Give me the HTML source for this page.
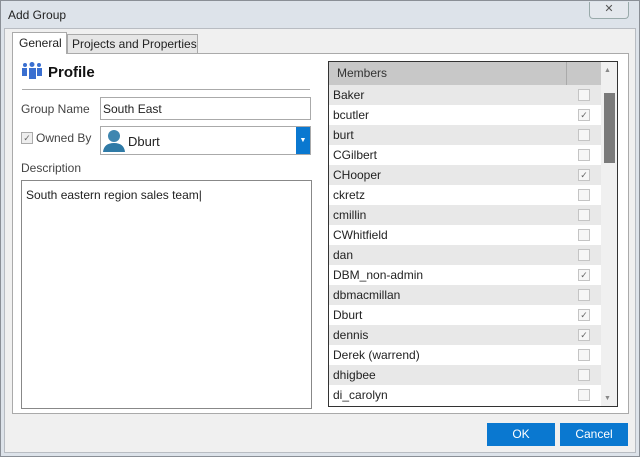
<!DOCTYPE html><html><head><style>
*{box-sizing:border-box;margin:0;padding:0}
body{width:640px;height:457px;overflow:hidden;font-family:"Liberation Sans",sans-serif;font-size:12px;color:#222;background:#fff;position:relative}
.a{position:absolute}
.frame{left:0;top:0;width:640px;height:457px;background:#dde3ea;border:1px solid #8a8f96}
.row{position:absolute;left:0;width:272px;height:20px;line-height:20px;padding-left:4px}
.cb{position:absolute;left:249px;top:4px;width:12px;height:12px;border:1px solid #c4c4c4;background:#f6f6f6;font-size:9px;line-height:10px;text-align:center;color:#666}
.btn{background:#0a78d0;color:#fff;text-align:center;line-height:23px;height:23px;font-size:12px}
</style></head><body>
<div class="a frame"></div>
<div class="a" style="left:8px;top:8px;font-size:12px">Add Group</div>
<div class="a" style="left:589px;top:2px;width:40px;height:17px;border:1px solid #9aa;border-top:none;border-radius:0 0 4px 4px;background:#e4e8ed;text-align:center;font-size:11px;line-height:15px;color:#555">✕</div>
<div class="a" style="left:4px;top:28px;width:632px;height:425px;background:#f0f0f0;border:1px solid #b8bcc2"></div>
<div class="a" style="left:12px;top:53px;width:617px;height:361px;background:#fff;border:1px solid #aaa"></div>
<div class="a" style="left:67px;top:34px;width:131px;height:20px;background:#e6e6e6;border:1px solid #aaa;line-height:18px;padding-left:4px">Projects and Properties</div>
<div class="a" style="left:12px;top:32px;width:55px;height:22px;background:#fff;border:1px solid #aaa;border-bottom:none;line-height:20px;padding-left:6px">General</div>
<svg class="a" style="left:22px;top:62px" width="20" height="18"><circle cx="3" cy="3" r="2" fill="#3a6fd0"/><circle cx="10" cy="2.5" r="2.5" fill="#3a6fd0"/><circle cx="17" cy="3" r="2" fill="#3a6fd0"/><rect x="0" y="6" width="5" height="8" fill="#3a6fd0"/><rect x="7" y="6" width="7" height="11" fill="#3a6fd0"/><rect x="15" y="6" width="5" height="8" fill="#3a6fd0"/></svg>
<div class="a" style="left:48px;top:64px;font-size:15px;font-weight:bold;color:#111">Profile</div>
<div class="a" style="left:22px;top:89px;width:288px;height:1px;background:#aaa"></div>
<div class="a" style="left:21px;top:102px;color:#444">Group Name</div>
<div class="a" style="left:100px;top:97px;width:211px;height:23px;border:1px solid #aaa;padding:4px 2px">South East</div>
<div class="a" style="left:21px;top:132px;width:12px;height:12px;border:1px solid #aaa;background:#eee;font-size:9px;line-height:10px;text-align:center;color:#666">✓</div>
<div class="a" style="left:36px;top:131px;color:#444">Owned By</div>
<div class="a" style="left:100px;top:126px;width:211px;height:29px;border:1px solid #aaa"></div>
<svg class="a" style="left:102px;top:128px" width="24" height="24"><circle cx="12" cy="8" r="6" fill="#3f86b0"/><path d="M1 24 Q2 15 12 15 Q22 15 23 24Z" fill="#2f7aa6"/></svg>
<div class="a" style="left:128px;top:134px;font-size:13px">Dburt</div>
<div class="a" style="left:296px;top:127px;width:14px;height:27px;background:#0a78d0;color:#fff;font-size:7px;text-align:center;line-height:27px">▼</div>
<div class="a" style="left:21px;top:161px;color:#444">Description</div>
<div class="a" style="left:21px;top:180px;width:291px;height:229px;border:1px solid #888;padding:7px 4px">South eastern region sales team|</div>
<div class="a" style="left:328px;top:61px;width:290px;height:346px;border:1px solid #333;overflow:hidden">
<div class="a" style="left:0;top:0;width:272px;height:23px;background:#c8c8c8;line-height:23px;padding-left:8px;color:#333">Members</div>
<div class="a" style="left:237px;top:0;width:1px;height:23px;background:#aaa"></div>
<div class="a" style="left:272px;top:0;width:16px;height:346px;background:#f0f0f0"></div>
<div class="a" style="left:275px;top:5px;font-size:7px;color:#888">▲</div>
<div class="a" style="left:275px;top:333px;font-size:7px;color:#888">▼</div>
<div class="a" style="left:275px;top:31px;width:11px;height:70px;background:#7a7a7a"></div>
<div class="a" style="left:0;top:23px;width:272px;height:330px">
<div class="row" style="top:0;background:#e8e8e8">Baker<span class="cb"></span></div>
<div class="row" style="top:20px">bcutler<span class="cb">✓</span></div>
<div class="row" style="top:40px;background:#e8e8e8">burt<span class="cb"></span></div>
<div class="row" style="top:60px">CGilbert<span class="cb"></span></div>
<div class="row" style="top:80px;background:#e8e8e8">CHooper<span class="cb">✓</span></div>
<div class="row" style="top:100px">ckretz<span class="cb"></span></div>
<div class="row" style="top:120px;background:#e8e8e8">cmillin<span class="cb"></span></div>
<div class="row" style="top:140px">CWhitfield<span class="cb"></span></div>
<div class="row" style="top:160px;background:#e8e8e8">dan<span class="cb"></span></div>
<div class="row" style="top:180px">DBM_non-admin<span class="cb">✓</span></div>
<div class="row" style="top:200px;background:#e8e8e8">dbmacmillan<span class="cb"></span></div>
<div class="row" style="top:220px">Dburt<span class="cb">✓</span></div>
<div class="row" style="top:240px;background:#e8e8e8">dennis<span class="cb">✓</span></div>
<div class="row" style="top:260px">Derek (warrend)<span class="cb"></span></div>
<div class="row" style="top:280px;background:#e8e8e8">dhigbee<span class="cb"></span></div>
<div class="row" style="top:300px">di_carolyn<span class="cb"></span></div>
</div></div>
<div class="a btn" style="left:487px;top:423px;width:68px">OK</div>
<div class="a btn" style="left:560px;top:423px;width:68px">Cancel</div>
</body></html>
